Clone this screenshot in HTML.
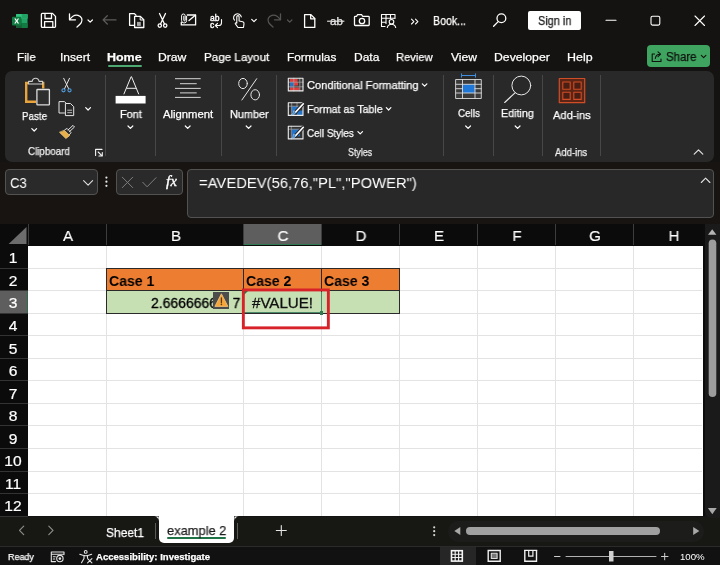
<!DOCTYPE html>
<html>
<head>
<meta charset="utf-8">
<title>Excel</title>
<style>
*{box-sizing:border-box;margin:0;padding:0}
html,body{width:720px;height:565px;overflow:hidden;background:#141414;font-family:"Liberation Sans",sans-serif;color:#fff}
#app{position:relative;width:720px;height:565px;overflow:hidden;background:#151311}
.abs{position:absolute}
.t{position:absolute;white-space:nowrap;line-height:1;transform-origin:0 50%;will-change:transform;-webkit-text-stroke:0.25px}
.c{position:absolute;white-space:nowrap;line-height:1;text-align:center;transform:translateX(-50%);will-change:transform}
svg{position:absolute;overflow:visible}
/* title */
#title{left:0;top:0;width:720px;height:44px;background:#151311}
#tabs{left:0;top:44px;width:720px;height:26px;background:#151311}
.tab{font-size:13.5px;color:#fff}
/* ribbon */
#ribbon{left:5px;top:70.5px;width:709px;height:91px;background:#292929;border-radius:7px}
.sep{position:absolute;width:1px;background:#474747;top:75px;height:80.5px}
.rl{font-size:11.5px;color:#fff}
.gl{font-size:10.5px;color:#e6e6e6}
/* formula */
#fbar{left:0;top:162px;width:720px;height:62px;background:#181412}
.box{position:absolute;background:#2a2a2a;border:1px solid #525252;border-radius:4px}
/* grid */
#colhdr{left:0;top:224px;width:702.7px;height:21.6px;background:#0b0b0b}
#rowhdr{left:0;top:245.5px;width:28.3px;height:270.9px;background:#0b0b0b}
#grid{left:28.3px;top:245.6px;width:674.4px;height:270.9px;background:#fff}
.ch{position:absolute;top:224px;height:22px;color:#fff;font-size:15px;line-height:22px;text-align:center;border-right:1px solid #3a3a3a}
.rh{position:absolute;left:0;width:28px;color:#fff;font-size:16px;text-align:center;border-bottom:1px solid #333}
.vl{position:absolute;top:245.5px;width:1px;height:270.9px;background:#e3e3e3}
.hl{position:absolute;left:28.3px;width:674.2px;height:1px;background:#e3e3e3}
#vscroll{left:702.7px;top:224px;width:17.3px;height:292.2px;background:#151515}
#sheetbar{left:0;top:516.5px;width:720px;height:30px;background:#171714}
#status{left:0;top:545.8px;width:720px;height:19.2px;background:#111;border-top:1px solid #2b2b2b}
.st{font-size:10.5px;color:#fff}
</style>
</head>
<body>
<div id="app">
<div id="title" class="abs"></div>
<div id="tabs" class="abs"></div>
<div id="ribbon" class="abs"></div>
<div id="fbar" class="abs"></div>
<div id="colhdr" class="abs"></div>
<div id="rowhdr" class="abs"></div>
<div id="grid" class="abs"></div>
<div id="vscroll" class="abs"></div>
<div id="sheetbar" class="abs"></div>
<div id="status" class="abs"></div>
<!--TITLE-->
<svg class="abs" style="left:0;top:0" width="720" height="44" viewBox="0 0 720 44" fill="none" stroke="#fff" stroke-width="1.3" stroke-linecap="round" stroke-linejoin="round">
<!-- excel logo -->
<g stroke="none">
<rect x="16" y="14" width="11.5" height="14" rx="1.2" fill="#21a366"/>
<rect x="16" y="14" width="11.5" height="4.7" rx="1" fill="#33c481"/>
<rect x="21.7" y="14" width="5.8" height="4.7" fill="#21a366"/>
<rect x="16" y="18.7" width="5.7" height="4.7" fill="#107c41"/>
<rect x="16" y="23.3" width="11.5" height="4.7" rx="1" fill="#185c37"/>
<rect x="21.7" y="23.3" width="5.8" height="4.7" fill="#107c41"/>
<rect x="12" y="16.7" width="9.3" height="8.8" rx="1" fill="#107c41"/>
<path d="M14.3 18.6h1.5l.95 1.7.95-1.7h1.4l-1.6 2.5 1.65 2.5h-1.5l-.98-1.75-.98 1.75h-1.45l1.65-2.5z" fill="#fff"/>
</g>
<!-- save -->
<path d="M42.300 13.400h10.200l3 3v10a.9.900 0 0 1-.9.900h-12.300a.9.900 0 0 1-.9-.9v-12.100a.9.900 0 0 1 .9-.9z"/>
<path d="M45 13.600v4.900h6.500v-4.900M44.600 27.100v-5.500h8.200v5.500"/>
<!-- undo -->
<path d="M69.500 13.800v6h6"/>
<path d="M69.800 19.500c2.200-3.300 5.300-5 8.300-4.200 3.600 1 4.800 4.700 3.200 7.400-.9 1.500-2.300 2.700-4.300 4.300"/>
<path d="M88 20l2.200 2.200 2.200-2.200" stroke-width="1.2"/>
<!-- back arrow grey -->
<path d="M116 19.900h-12.800M107.300 15.800l-4.200 4.100 4.200 4.100" stroke="#5c5c5c"/>
<!-- copy/paste doc -->
<path d="M134 25.300h-4.400v-11.700h4.800l1.600 1.600"/>
<path d="M134.600 16.400h5.800l3.400 3.400v7.700h-9.200z"/>
<path d="M140.200 16.600v3.400h3.400" stroke-width="1"/>
<rect x="137" y="21.900" width="3.800" height="4" fill="#a8a8a8" stroke="none"/>
<!-- scissors -->
<path d="M159.500 13.500l5 10.500M165.500 13.500l-5 10.500"/>
<circle cx="159.800" cy="25.600" r="1.700"/><circle cx="165.200" cy="25.600" r="1.700"/>
<!-- envelope with clip -->
<path d="M187.300 15h8.300v9.900h-14.300v-2.600"/>
<path d="M195.300 15.300l-6.300 5.300"/>
<path d="M186.600 16.300v4.200a2.500 2.500 0 0 1-5 0v-4.700a1.800 1.800 0 0 1 3.600 0v4.400a.7.700 0 0 1-1.400 0v-3.900" stroke-width="1"/>
<!-- redo grey -->
<g stroke="#555">
<path d="M280.500 13.800v6h-6"/>
<path d="M280.200 19.500c-2.200-3.300-5.300-5-8.300-4.200-3.600 1-4.800 4.700-3.200 7.400.9 1.500 2.300 2.700 4.300 4.300"/>
<path d="M287.500 20l2.200 2.200 2.200-2.200" stroke-width="1.200"/>
</g>
<!-- new doc -->
<path d="M304.600 14.600h6.300l3.900 3.900v8.900h-10.200z"/>
<path d="M310.700 14.800v4h4"/>
<!-- camera -->
<path d="M355.300 16.300h1.300l.9-1.600h4.200l.9 1.600h5.800a.8.800 0 0 1 .8.800v7.600a.8.800 0 0 1-.8.800h-13.100a.8.800 0 0 1-.8-.8v-7.600a.8.800 0 0 1 .8-.8z"/>
<circle cx="362" cy="21" r="2.700"/>
<!-- table person -->
<path d="M385 26.500h-3.500v-12h13.500v4M381.500 18.300h13.500M381.500 22.300h4.500M386 14.500v9M390.500 14.500v4" stroke-width="1.100"/>
<circle cx="391.500" cy="21.800" r="2.300" stroke-width="1.100"/>
<path d="M387.300 27.500c.6-2.200 2.200-3.200 4.200-3.200s3.600 1 4.200 3.200" stroke-width="1.100"/>
<!-- >> -->
<path d="M411.500 19.200l2.400 2.400-2.400 2.400M415.500 19.200l2.400 2.400-2.400 2.400" stroke-width="1.100"/>
<!-- search -->
<circle cx="501.400" cy="18.300" r="4.400"/>
<path d="M498.200 21.600l-4.600 4.700"/>
<!-- window controls -->
<path d="M606 20.300h10" stroke-width="1.100"/>
<rect x="651" y="16.300" width="8.800" height="8.800" rx="1.500" stroke-width="1.100"/>
<path d="M695 16l9.500 9.500M704.500 16l-9.500 9.500" stroke-width="1.100"/>
<!-- touch hand -->
<g stroke-width="1.100">
<path d="M236.800 23.200v-6.400a1.150 1.150 0 0 1 2.300 0v4.200l3.600.8c.9.200 1.400.9 1.300 1.800l-.5 3.900h-5.500l-2.600-3.600c-.5-.8.500-1.700 1.400-.700z"/>
<path d="M234.500 20.200a3.900 3.900 0 1 1 6.800-3.300"/>
</g>
<path d="M251.700 19.300l2.300 2.300 2.300-2.300" stroke-width="1.200"/>
</svg>
<div class="t" style="left:209.500px;top:13.500px;font-size:8.500px;-webkit-text-stroke:0.4px">ab</div>
<div class="t" style="left:209.500px;top:20.500px;font-size:8.500px;-webkit-text-stroke:0.4px">c</div>
<svg class="abs" style="left:0;top:0" width="720" height="44" viewBox="0 0 720 44" fill="none" stroke="#fff" stroke-width="1.100" stroke-linecap="round" stroke-linejoin="round">
<path d="M221.500 19.500v3.200c0 1.800-1 2.800-2.800 2.800h-3M217.500 23.300l-2.200 2.200 2.200 2.200"/>
<path d="M327.500 21.200h16.500" stroke-width="1"/>
</svg>
<div class="t" style="left:330px;top:15.500px;font-size:11.500px;color:#e8e8e8">ab</div>
<div class="t" style="left:432.6px;top:14.80px;font-size:12.2px;font-weight:400;color:#fff;transform:scaleX(0.8699);">Book...</div>
<div class="abs" style="left:528px;top:11px;width:52.500px;height:19px;background:#fff;border-radius:2px"></div>
<div class="t" style="left:537.6px;top:14.70px;font-size:12.2px;font-weight:400;color:#1b1b1b;transform:scaleX(0.8963);">Sign in</div>

<!--tabs-->
<div class="t" style="left:16.8px;top:51.60px;font-size:11.8px;font-weight:400;color:#fff;transform:scaleX(0.9834);">File</div>
<div class="t" style="left:59.5px;top:51.60px;font-size:11.8px;font-weight:400;color:#fff;transform:scaleX(1.0164);">Insert</div>
<div class="t" style="left:107.2px;top:51.60px;font-size:11.8px;font-weight:700;color:#fff;transform:scaleX(1.0555);">Home</div>
<div class="t" style="left:157.8px;top:51.60px;font-size:11.8px;font-weight:400;color:#fff;transform:scaleX(1.0316);">Draw</div>
<div class="t" style="left:203.5px;top:51.60px;font-size:11.8px;font-weight:400;color:#fff;transform:scaleX(0.9857);">Page Layout</div>
<div class="t" style="left:287.2px;top:51.60px;font-size:11.8px;font-weight:400;color:#fff;transform:scaleX(1.0026);">Formulas</div>
<div class="t" style="left:353.8px;top:51.60px;font-size:11.8px;font-weight:400;color:#fff;transform:scaleX(1.0192);">Data</div>
<div class="t" style="left:396.2px;top:51.60px;font-size:11.8px;font-weight:400;color:#fff;transform:scaleX(0.9460);">Review</div>
<div class="t" style="left:450.5px;top:51.60px;font-size:11.8px;font-weight:400;color:#fff;transform:scaleX(1.0253);">View</div>
<div class="t" style="left:493.9px;top:51.60px;font-size:11.8px;font-weight:400;color:#fff;transform:scaleX(1.0375);">Developer</div>
<div class="t" style="left:567.2px;top:51.60px;font-size:11.8px;font-weight:400;color:#fff;transform:scaleX(1.0550);">Help</div>
<div class="abs" style="left:107.5px;top:64.7px;width:34px;height:2.3px;background:#4ea872;border-radius:1px"></div>
<div class="abs" style="left:647px;top:45px;width:63px;height:22px;background:#3ea45f;border-radius:4px"></div>
<div class="t" style="left:665.5px;top:50.70px;font-size:12px;font-weight:400;color:#10130f;transform:scaleX(0.9522);">Share</div>
<svg class="abs" style="left:0;top:44px" width="720" height="26" viewBox="0 44 720 26" fill="none" stroke="#10130f" stroke-width="1.1" stroke-linecap="round" stroke-linejoin="round">
<path d="M654.5 54h-2.300v7.500h8.800v-2.500M655.300 58.500c.3-2.800 2-4.300 4.700-4.300M658 51.800l2.600 2.400-2.600 2.400"/>
<path d="M701.300 55.300l2.300 2.300 2.300-2.300"/>
</svg>

<!--ribbon-->
<div class="sep" style="left:104.8px"></div><div class="sep" style="left:154.5px"></div><div class="sep" style="left:221.0px"></div><div class="sep" style="left:276.0px"></div><div class="sep" style="left:443.2px"></div><div class="sep" style="left:493.2px"></div><div class="sep" style="left:542.1px"></div><div class="sep" style="left:600.2px"></div>
<div class="t" style="left:22.2px;top:110.70px;font-size:11.2px;font-weight:400;color:#fff;transform:scaleX(0.8738);">Paste</div><div class="t" style="left:120px;top:108.50px;font-size:11.2px;font-weight:400;color:#fff;transform:scaleX(0.9736);">Font</div><div class="t" style="left:163px;top:108.50px;font-size:11.2px;font-weight:400;color:#fff;transform:scaleX(1.0090);">Alignment</div><div class="t" style="left:229.6px;top:108.50px;font-size:11.2px;font-weight:400;color:#fff;transform:scaleX(0.9750);">Number</div><div class="t" style="left:457.5px;top:108.40px;font-size:11.2px;font-weight:400;color:#fff;transform:scaleX(0.8844);">Cells</div><div class="t" style="left:501.2px;top:108.40px;font-size:11.2px;font-weight:400;color:#fff;transform:scaleX(0.9585);">Editing</div><div class="t" style="left:552.5px;top:109.80px;font-size:11.8px;font-weight:400;color:#fff;transform:scaleX(0.9450);">Add-ins</div><div class="t" style="left:306.7px;top:80.00px;font-size:11.2px;font-weight:400;color:#fff;transform:scaleX(0.9923);">Conditional Formatting</div><div class="t" style="left:306.7px;top:103.90px;font-size:11.2px;font-weight:400;color:#fff;transform:scaleX(0.9461);">Format as Table</div><div class="t" style="left:306.7px;top:127.80px;font-size:11.2px;font-weight:400;color:#fff;transform:scaleX(0.8854);">Cell Styles</div><div class="t" style="left:28.4px;top:147.40px;font-size:10.4px;font-weight:400;color:#f0f0f0;transform:scaleX(0.9397);">Clipboard</div><div class="t" style="left:347.8px;top:147.80px;font-size:10.4px;font-weight:400;color:#f0f0f0;transform:scaleX(0.8552);">Styles</div><div class="t" style="left:555px;top:148.40px;font-size:10.4px;font-weight:400;color:#f0f0f0;transform:scaleX(0.9139);">Add-ins</div>
<svg class="abs" style="left:0;top:70px" width="720" height="92" viewBox="0 70 720 92" fill="none" stroke="#fff" stroke-width="1.1" stroke-linecap="round" stroke-linejoin="round">
<!-- chevrons -->
<g stroke-width="1.2">
<path d="M31.800 128.600l2.400 2.400 2.400-2.400"/>
<path d="M85.700 107.600l2.400 2.400 2.400-2.400"/>
<path d="M128 126l2.400 2.400 2.400-2.400"/>
<path d="M185.300 126l2.400 2.400 2.400-2.400"/>
<path d="M246.200 126l2.400 2.400 2.400-2.400"/>
<path d="M465.700 126l2.400 2.400 2.400-2.400"/>
<path d="M515.200 126l2.400 2.400 2.400-2.400"/>
<path d="M422.300 83.800l2.300 2.300 2.300-2.300"/>
<path d="M386.300 107.700l2.300 2.300 2.300-2.300"/>
<path d="M357.900 131.600l2.300 2.300 2.300-2.300"/>
<path d="M694.200 154.200l4.300-4.300 4.300 4.300" stroke="#e0e0e0"/>
</g>
<!-- paste -->
<path d="M36 101.800h-9.800v-18.800h2.500M40.800 83h2.400v5.500" stroke="#e9a43c" stroke-width="2.400" stroke-linecap="butt" stroke-linejoin="miter"/>
<path d="M28.600 84v-2.600h3.600c.2-1.700 1.500-3.200 3.400-3.200s3.200 1.500 3.400 3.200h3.600v2.600z" stroke="#cfcfcf" stroke-width="1.100" fill="#292929"/>
<rect x="36.900" y="89.500" width="12.500" height="15.400" rx=".6" stroke="#dcdcdc" stroke-width="1.300" fill="#2e2e2e"/>
<!-- cut -->
<path d="M63.700 78.300l5 10.500M69.500 78.300l-5 10.500" stroke="#e6e6e6" stroke-width="1"/>
<circle cx="63.500" cy="90.300" r="1.600" stroke="#4f9de0" stroke-width="1.100"/><circle cx="69.500" cy="90.300" r="1.600" stroke="#4f9de0" stroke-width="1.100"/>
<!-- copy -->
<path d="M64.500 113h-5.500v-11.400h5.500l1.800 1.800" stroke="#e6e6e6" stroke-width="1"/>
<path d="M65.800 103.500h4.700l3.200 3.200v8.900h-7.900z" stroke="#e6e6e6" stroke-width="1" fill="#292929"/>
<path d="M67.700 110.200h4M67.700 112.700h4" stroke="#cfcfcf" stroke-width=".9"/>
<!-- format painter -->
<path d="M68 130l5-4.600 1.500 1.600-5 4.600" stroke="#e6e6e6" stroke-width="1"/>
<path d="M64.800 129.800l2.300-1.400 4 4.300-1.700 2" stroke="#e6e6e6" stroke-width=".9"/>
<path d="M64.500 130.500l5.200 5-3.800 3-6.200-6z" fill="#e8b04a" stroke="#f3d28a" stroke-width=".7"/>
<!-- launcher -->
<path d="M95.600 155.400v-6h6.400M98.200 152l3.800 3.800M102.300 152.600v3.400h-3.400" stroke="#f4f4f4" stroke-width="1.100"/>
<!-- Font A -->
<path d="M123.800 94.300l7.300-17.600h.4l7.300 17.600M126.500 88.300h9.700" stroke="#f0f0f0" stroke-width="1" stroke-linecap="butt"/>
<rect x="115.600" y="95.900" width="30" height="7.600" fill="#fff" stroke="none"/>
<!-- Alignment -->
<path d="M175 78.700h25.700M180 83.700h16.700M175 88.400h25.700M180 92.900h16.700M175 97.400h25.700" stroke="#d6d6d6" stroke-width="1" stroke-linecap="butt"/>
<!-- percent -->
<ellipse cx="243" cy="83.500" rx="4.300" ry="5.100" stroke="#e6e6e6" stroke-width="1"/>
<ellipse cx="255.200" cy="94.800" rx="4.300" ry="5.100" stroke="#e6e6e6" stroke-width="1"/>
<path d="M256.700 78.700l-14.800 21.300" stroke="#e6e6e6" stroke-width="1"/>
<!-- CF icon -->
<g stroke="none">
<rect x="288" y="78" width="15" height="13" fill="#3a3a3a"/>
<rect x="290" y="79" width="7.500" height="3" fill="#e03c3c"/>
<rect x="294" y="82" width="4" height="3.500" fill="#e03c3c"/>
<rect x="290" y="82" width="3.500" height="6" fill="#2f6fc0"/>
<rect x="290" y="87.500" width="9.500" height="3" fill="#e03c3c"/>
</g>
<path d="M288.200 82.200h14.800M288.200 86.800h14.800M293.800 78.200v12.700M299.800 78.200v12.700" stroke="#a8a8a8" stroke-width=".7"/><path d="M288.300 78.300h14.700v12.600h-14.700z" stroke="#ececec" stroke-width="1.100"/>
<!-- FT icon -->
<g stroke="none">
<rect x="288" y="102.500" width="15" height="13" fill="#333"/>
<rect x="291.500" y="106.300" width="8" height="6" fill="#2373c8"/>
<rect x="297" y="110.500" width="6" height="5" fill="#2373c8"/>
</g>
<path d="M288.200 106.200h14.800M291.700 102.700v12.700M297 102.700v4" stroke="#a8a8a8" stroke-width=".7"/><path d="M288.300 102.800h14.700v12.600h-14.700z" stroke="#ececec" stroke-width="1.100"/>
<path d="M303.300 103.800l-7.800 8.500" stroke="#2a2a2a" stroke-width="3.600"/><path d="M303.300 103.800l-7.800 8.500" stroke="#fff" stroke-width="1.700"/>
<path d="M295.800 112.300c-.8 1.800-2.300 2.800-4.800 3 1.500-.9 1.800-2.200 2.600-4.300z" fill="#3b8fe0" stroke="#cfe3f7" stroke-width=".5"/>
<!-- CS icon -->
<g stroke="none">
<rect x="288" y="126" width="15" height="13" fill="#333"/>
<rect x="291.500" y="129.300" width="8.500" height="7" fill="#2373c8"/>
</g>
<path d="M288.200 129.200h14.800M291.300 126.200v12.700" stroke="#a8a8a8" stroke-width=".7"/><path d="M288.300 126.300h14.700v12.600h-14.700z" stroke="#ececec" stroke-width="1.100"/>
<path d="M303.300 127.300l-7.800 8.500" stroke="#2a2a2a" stroke-width="3.600"/><path d="M303.300 127.300l-7.800 8.500" stroke="#fff" stroke-width="1.700"/>
<path d="M295.800 135.800c-.8 1.800-2.300 2.800-4.800 3 1.500-.9 1.800-2.200 2.600-4.300z" fill="#3b8fe0" stroke="#cfe3f7" stroke-width=".5"/>
<!-- Cells icon -->
<path d="M461.500 75.500h14M461.500 73.800v3.400M475.500 73.800v3.400" stroke="#3f8ee0" stroke-width="1"/>
<rect x="456" y="79.500" width="25.300" height="19" fill="#3a3a3a" stroke="none"/>
<rect x="462.500" y="84.300" width="12.500" height="8.700" fill="#1f78d8" stroke="none"/>
<path d="M456 79.500h25.300v19h-25.300zM456 84.300h25.300M456 88.700h6.500M475 88.700h6.300M456 93h25.300M462.500 79.500v19M475 79.500v19" stroke="#dcdcdc" stroke-width=".9"/>
<!-- Editing magnifier -->
<circle cx="521.300" cy="85.500" r="9.400" stroke="#e8e8e8" stroke-width="1"/>
<path d="M515 92.800l-10.300 9.700" stroke="#e8e8e8" stroke-width="1.100"/>
<!-- Add-ins -->
<rect x="559.300" y="78.500" width="25.400" height="24.200" fill="#5b2414" stroke="#cf4e27" stroke-width="1.200"/>
<path d="M562.800 82h7.400v7.200h-7.400zM573.800 82h7.400v7.200h-7.400zM562.800 92.200h7.400v7.200h-7.400zM573.800 92.200h7.400v7.200h-7.400z" stroke="#cf4e27" stroke-width="1.100" fill="#4a1e12"/>
</svg>

<!--formula-->
<div class="box" style="left:5px;top:169px;width:93px;height:26px"></div><div class="box" style="left:116px;top:169px;width:67px;height:26px"></div><div class="box" style="left:187px;top:169px;width:527px;height:49px;background:#282828"></div>
<div class="t" style="left:9.6px;top:174.85px;font-size:15.3px;font-weight:400;color:#fff;transform:scaleX(0.8588);-webkit-text-stroke:0">C3</div><div class="t" style="left:198.6px;top:175.10px;font-size:15.4px;font-weight:400;color:#fff;transform:scaleX(0.9619);-webkit-text-stroke:0">=AVEDEV(56,76,"PL","POWER")</div><div class="t" style="left:165.6px;top:172.900px;font-family:'Liberation Serif',serif;font-style:italic;font-size:15.5px;color:#fff;-webkit-text-stroke:0.35px">f<span style="font-size:14.5px;margin-left:0.2px;position:relative;top:0.3px">x</span></div>
<svg class="abs" style="left:0;top:162px" width="720" height="62" viewBox="0 162 720 62" fill="none" stroke="#fff" stroke-width="1.1" stroke-linecap="round" stroke-linejoin="round">
<path d="M83.600 180.600l4.500 4.500 4.500-4.500" stroke="#e0e0e0" stroke-width="1.100"/>
<g fill="#e8e8e8" stroke="none"><circle cx="106.400" cy="177.600" r="1.100"/><circle cx="106.400" cy="181.700" r="1.100"/><circle cx="106.400" cy="185.800" r="1.100"/></g>
<path d="M122.300 177.200l10.400 10.400M132.700 177.200l-10.400 10.400" stroke="#7e7e7e" stroke-width="1"/>
<path d="M142.800 182.300l4.300 4.500 8.900-9.100" stroke="#7e7e7e" stroke-width="1"/>
<path d="M701.300 182.500l4.300-4.300 4.300 4.300" stroke="#e0e0e0" stroke-width="1.100"/>
</svg>

<!--grid-->
<div class="abs" style="left:243.7px;top:224.2px;width:77.9px;height:21.3px;background:#5e5e5e"></div><div class="abs" style="left:243.2px;top:244.3px;width:78.4px;height:1.2px;background:#2f7a53"></div><div class="abs" style="left:0;top:291.1px;width:27px;height:21.55px;background:#5e5e5e"></div><div class="abs" style="left:27px;top:290.6px;width:1.2px;height:22.55px;background:#2f6a4a"></div>
<div class="abs" style="left:106.0px;top:224.2px;width:1px;height:21.3px;background:#3c3c3c"></div><div class="vl" style="left:106.0px"></div><div class="abs" style="left:242.7px;top:224.2px;width:1px;height:21.3px;background:#3c3c3c"></div><div class="vl" style="left:242.7px"></div><div class="abs" style="left:321.1px;top:224.2px;width:1px;height:21.3px;background:#3c3c3c"></div><div class="vl" style="left:321.1px"></div><div class="abs" style="left:399.0px;top:224.2px;width:1px;height:21.3px;background:#3c3c3c"></div><div class="vl" style="left:399.0px"></div><div class="abs" style="left:477.0px;top:224.2px;width:1px;height:21.3px;background:#3c3c3c"></div><div class="vl" style="left:477.0px"></div><div class="abs" style="left:555.0px;top:224.2px;width:1px;height:21.3px;background:#3c3c3c"></div><div class="vl" style="left:555.0px"></div><div class="abs" style="left:633.2px;top:224.2px;width:1px;height:21.3px;background:#3c3c3c"></div><div class="vl" style="left:633.2px"></div><div class="abs" style="left:27.6px;top:224.2px;width:1px;height:21.3px;background:#3c3c3c"></div>
<div class="hl" style="top:267.55px"></div><div class="abs" style="left:0;top:267.55px;width:28px;height:1px;background:#333"></div><div class="hl" style="top:290.10px"></div><div class="abs" style="left:0;top:290.10px;width:28px;height:1px;background:#333"></div><div class="hl" style="top:312.65px"></div><div class="abs" style="left:0;top:312.65px;width:28px;height:1px;background:#333"></div><div class="hl" style="top:335.20px"></div><div class="abs" style="left:0;top:335.20px;width:28px;height:1px;background:#333"></div><div class="hl" style="top:357.75px"></div><div class="abs" style="left:0;top:357.75px;width:28px;height:1px;background:#333"></div><div class="hl" style="top:380.30px"></div><div class="abs" style="left:0;top:380.30px;width:28px;height:1px;background:#333"></div><div class="hl" style="top:402.85px"></div><div class="abs" style="left:0;top:402.85px;width:28px;height:1px;background:#333"></div><div class="hl" style="top:425.40px"></div><div class="abs" style="left:0;top:425.40px;width:28px;height:1px;background:#333"></div><div class="hl" style="top:447.95px"></div><div class="abs" style="left:0;top:447.95px;width:28px;height:1px;background:#333"></div><div class="hl" style="top:470.50px"></div><div class="abs" style="left:0;top:470.50px;width:28px;height:1px;background:#333"></div><div class="hl" style="top:493.05px"></div><div class="abs" style="left:0;top:493.05px;width:28px;height:1px;background:#333"></div><div class="abs" style="left:0;top:515.60px;width:28px;height:1px;background:#333"></div>
<svg class="abs" style="left:0;top:224px" width="28" height="22" viewBox="0 0 28 22"><path d="M26.500 2.900v17.100h-17.900z" fill="#6c6c6c"/></svg>
<div class="c" style="left:68.1px;top:227.8px;font-size:15.4px;color:#fff;-webkit-text-stroke:0.15px;transform:translateX(-50%) scaleX(0.98)">A</div><div class="c" style="left:175.5px;top:227.8px;font-size:15.4px;color:#fff;-webkit-text-stroke:0.15px;transform:translateX(-50%) scaleX(0.98)">B</div><div class="c" style="left:283.1px;top:227.8px;font-size:15.4px;color:#fff;-webkit-text-stroke:0.15px;transform:translateX(-50%) scaleX(0.98)">C</div><div class="c" style="left:361.2px;top:227.8px;font-size:15.4px;color:#fff;-webkit-text-stroke:0.15px;transform:translateX(-50%) scaleX(0.98)">D</div><div class="c" style="left:439.2px;top:227.8px;font-size:15.4px;color:#fff;-webkit-text-stroke:0.15px;transform:translateX(-50%) scaleX(0.98)">E</div><div class="c" style="left:517.2px;top:227.8px;font-size:15.4px;color:#fff;-webkit-text-stroke:0.15px;transform:translateX(-50%) scaleX(0.98)">F</div><div class="c" style="left:595.3px;top:227.8px;font-size:15.4px;color:#fff;-webkit-text-stroke:0.15px;transform:translateX(-50%) scaleX(0.98)">G</div><div class="c" style="left:673.5px;top:227.8px;font-size:15.4px;color:#fff;-webkit-text-stroke:0.15px;transform:translateX(-50%) scaleX(0.98)">H</div>
<div class="c" style="left:13.1px;top:252.37px;font-size:13.8px;color:#fff;-webkit-text-stroke:0.2px;transform:translateX(-50%) scaleX(1.13)">1</div><div class="c" style="left:13.1px;top:274.92px;font-size:13.8px;color:#fff;-webkit-text-stroke:0.2px;transform:translateX(-50%) scaleX(1.13)">2</div><div class="c" style="left:13.1px;top:297.47px;font-size:13.8px;color:#fff;-webkit-text-stroke:0.2px;transform:translateX(-50%) scaleX(1.13)">3</div><div class="c" style="left:13.1px;top:320.02px;font-size:13.8px;color:#fff;-webkit-text-stroke:0.2px;transform:translateX(-50%) scaleX(1.13)">4</div><div class="c" style="left:13.1px;top:342.57px;font-size:13.8px;color:#fff;-webkit-text-stroke:0.2px;transform:translateX(-50%) scaleX(1.13)">5</div><div class="c" style="left:13.1px;top:365.12px;font-size:13.8px;color:#fff;-webkit-text-stroke:0.2px;transform:translateX(-50%) scaleX(1.13)">6</div><div class="c" style="left:13.1px;top:387.68px;font-size:13.8px;color:#fff;-webkit-text-stroke:0.2px;transform:translateX(-50%) scaleX(1.13)">7</div><div class="c" style="left:13.1px;top:410.22px;font-size:13.8px;color:#fff;-webkit-text-stroke:0.2px;transform:translateX(-50%) scaleX(1.13)">8</div><div class="c" style="left:13.1px;top:432.77px;font-size:13.8px;color:#fff;-webkit-text-stroke:0.2px;transform:translateX(-50%) scaleX(1.13)">9</div><div class="c" style="left:13.1px;top:455.32px;font-size:13.8px;color:#fff;-webkit-text-stroke:0.2px;transform:translateX(-50%) scaleX(1.13)">10</div><div class="c" style="left:13.1px;top:477.87px;font-size:13.8px;color:#fff;-webkit-text-stroke:0.2px;transform:translateX(-50%) scaleX(1.13)">11</div><div class="c" style="left:13.1px;top:500.42px;font-size:13.8px;color:#fff;-webkit-text-stroke:0.2px;transform:translateX(-50%) scaleX(1.13)">12</div>
<div class="abs" style="left:106.5px;top:268.05px;width:293px;height:22.55px;background:#ed7d31"></div><div class="abs" style="left:106.5px;top:290.6px;width:293px;height:22.55px;background:#c6e0b4"></div><div class="abs" style="left:106px;top:267.55px;width:294px;height:1px;background:#2a2a2a"></div><div class="abs" style="left:106px;top:290.10px;width:294px;height:1px;background:#2a2a2a"></div><div class="abs" style="left:106px;top:312.65px;width:294px;height:1px;background:#2a2a2a"></div><div class="abs" style="left:106.0px;top:267.55px;width:1px;height:46.10px;background:#2a2a2a"></div><div class="abs" style="left:242.7px;top:267.55px;width:1px;height:46.10px;background:#2a2a2a"></div><div class="abs" style="left:321.1px;top:267.55px;width:1px;height:46.10px;background:#2a2a2a"></div><div class="abs" style="left:399.0px;top:267.55px;width:1px;height:46.10px;background:#2a2a2a"></div>
<div class="t" style="left:109.4px;top:274.00px;font-size:14.4px;font-weight:700;color:#000;transform:scaleX(0.9740);-webkit-text-stroke:0">Case 1</div><div class="t" style="left:246.1px;top:274.00px;font-size:14.4px;font-weight:700;color:#000;transform:scaleX(0.9740);-webkit-text-stroke:0">Case 2</div><div class="t" style="left:323.8px;top:274.00px;font-size:14.4px;font-weight:700;color:#000;transform:scaleX(0.9740);-webkit-text-stroke:0">Case 3</div><div class="t" style="left:151.2px;top:295.80px;font-size:14.4px;font-weight:400;color:#000;transform:scaleX(0.9702);-webkit-text-stroke:0.3px">2.6666666667</div><div class="t" style="left:252px;top:295.80px;font-size:14.4px;font-weight:400;color:#111;transform:scaleX(1.0495);-webkit-text-stroke:0.3px">#VALUE!</div><div class="abs" style="left:212.700px;top:291.500px;width:16.900px;height:17.300px;background:#4c4c4c"></div><svg class="abs" style="left:212px;top:290px" width="20" height="20" viewBox="212 290 20 20"><path d="M221.400 293.800l6.500 12.600h-13z" fill="#f4a63a" stroke="#f9c77a" stroke-width=".8" stroke-linejoin="round"/><path d="M221.400 298v4.500" stroke="#5a3a10" stroke-width="1.300" stroke-linecap="round"/><circle cx="221.400" cy="304.400" r=".8" fill="#5a3a10"/></svg><div class="abs" style="left:229.400px;top:292px;width:3.200px;height:20px;background:#c6e0b4"></div><div class="abs" style="left:243.7px;top:312.15px;width:77px;height:1.3px;background:#4a8a68"></div><div class="abs" style="left:320.900px;top:291.60px;width:1.3px;height:20.55px;background:#4a8a68"></div><div class="abs" style="left:319.500px;top:311.200px;width:3.800px;height:3.800px;background:#2f7a53"></div><svg class="abs" style="left:243.700px;top:291.300px" width="5" height="5" viewBox="0 0 5 5"><path d="M0 0h4L0 4z" fill="#1e7a45"/></svg><svg class="abs" style="left:240px;top:287px" width="92" height="45" viewBox="240 287 92 45"><rect x="243.350" y="289.950" width="85" height="37.900" fill="none" stroke="#d8222a" stroke-width="2.900"/></svg>
<div class="abs" style="left:704.700px;top:224px;width:15.300px;height:294px;background:#1a1a1a;border-radius:0 0 0 6px"></div><div class="abs" style="left:702.700px;top:224px;width:2px;height:292.200px;background:#0c0c0c"></div><svg class="abs" style="left:702px;top:224px" width="18" height="292" viewBox="702 224 18 292"><path d="M708 234.700l4.200-5.500 4.200 5.500z" fill="#b4b4b4"/><path d="M707.900 508l4.400 6.200 4.400-6.200z" fill="#a8a8a8"/><rect x="708.700" y="239.500" width="7.600" height="157.500" rx="3.800" fill="#9c9c9c"/></svg>
<!--sheetbar-->
<div class="abs" style="left:448px;top:520.500px;width:256px;height:21.500px;border-radius:10px;background:#1c1c1b"></div><div class="abs" style="left:158.700px;top:516.300px;width:75.800px;height:26.300px;background:#fff;border-radius:0 0 5px 5px"></div><div class="abs" style="left:167px;top:537.200px;width:59px;height:2.200px;background:#1f7246;border-radius:1px"></div><svg class="abs" style="left:150px;top:516px" width="95" height="6" viewBox="150 516 95 6"><path d="M154.200 516.500A4.500 4.500 0 0 1 158.700 521L158.700 516.500ZM239 516.500A4.500 4.500 0 0 0 234.500 521L234.500 516.500Z" fill="#fff"/></svg><div class="abs" style="left:155px;top:523px;width:1px;height:16px;background:#5a5a5a"></div><div class="abs" style="left:236.700px;top:523px;width:1px;height:16px;background:#5a5a5a"></div>
<div class="t" style="left:106.3px;top:525.80px;font-size:13.2px;font-weight:400;color:#fff;transform:scaleX(0.9088);">Sheet1</div><div class="t" style="left:166.7px;top:523.50px;font-size:13.4px;font-weight:400;color:#1e1e1e;transform:scaleX(0.9612);">example 2</div>
<svg class="abs" style="left:0;top:516px" width="720" height="31" viewBox="0 516 720 31" fill="none" stroke="#fff" stroke-width="1.1" stroke-linecap="round" stroke-linejoin="round">
<path d="M23.700 526.200l-4.200 4.200 4.200 4.200M48.800 526.200l4.200 4.200-4.200 4.200" stroke="#8c8c8c" stroke-width="1.200"/>
<path d="M276.300 530.500h10M281.300 525.500v10" stroke="#e6e6e6" stroke-width="1.100"/>
<g fill="#d8d8d8" stroke="none"><circle cx="434.200" cy="527.300" r="1.100"/><circle cx="434.200" cy="531.200" r="1.100"/><circle cx="434.200" cy="535.100" r="1.100"/></g>
<path d="M460.300 527v8l-6-4z" fill="#a8a8a8" stroke="none"/>
<path d="M693.200 527v8l6.200-4z" fill="#a8a8a8" stroke="none"/>
<rect x="466" y="527" width="194" height="8" rx="4" fill="#a0a0a0" stroke="none"/>
</svg>

<!--status-->
<div class="abs" style="left:439.700px;top:546.800px;width:36.300px;height:18.200px;background:#262626"></div><div class="t" style="left:8.1px;top:552.95px;font-size:9.3px;font-weight:400;color:#fff;transform:scaleX(0.9637);">Ready</div><div class="t" style="left:96.2px;top:552.95px;font-size:9.3px;font-weight:700;color:#fff;transform:scaleX(1.0262);">Accessibility: Investigate</div><div class="t" style="left:680.2px;top:552.55px;font-size:9.3px;font-weight:400;color:#fff;transform:scaleX(1.0386);-webkit-text-stroke:0">100%</div>
<svg class="abs" style="left:0;top:546px" width="720" height="19" viewBox="0 546 720 19" fill="none" stroke="#fff" stroke-width="1" stroke-linecap="round" stroke-linejoin="round">
<!-- macro record -->
<path d="M51.300 552h12.700v2.600M51.300 552v9.600h4.200M51.300 554.300h12.700M53.300 556.800h2M53.300 559h1.500" stroke="#e6e6e6" stroke-width="1.100"/>
<circle cx="59.900" cy="558.600" r="3.200" stroke="#e6e6e6" stroke-width="1.100"/><circle cx="59.900" cy="558.600" r="1.300" fill="#e6e6e6" stroke="none"/>
<!-- accessibility -->
<circle cx="85.700" cy="551.900" r="1.400" stroke="#e6e6e6" stroke-width="1.100"/>
<path d="M79.800 554.300c2 1 3.600 1.400 5.900 1.400s3.900-.4 5.900-1.400M84 555.700v2.800l-2.500 4.200M87.500 555.700v2" stroke="#e6e6e6" stroke-width="1.100"/>
<path d="M87.600 558.600l4.300 4.200M91.900 558.600l-4.300 4.200" stroke="#e6e6e6" stroke-width="1.100"/>
<!-- normal view -->
<rect x="450.700" y="549.900" width="12.400" height="12" fill="#f4f4f4" stroke="none"/>
<g fill="#1c1c1c" stroke="none"><rect x="452.300" y="551.500" width="2.300" height="2.300"/><rect x="455.750" y="551.500" width="2.300" height="2.300"/><rect x="459.200" y="551.500" width="2.300" height="2.300"/><rect x="452.300" y="554.750" width="2.300" height="2.300"/><rect x="455.750" y="554.750" width="2.300" height="2.300"/><rect x="459.200" y="554.750" width="2.300" height="2.300"/><rect x="452.300" y="558" width="2.300" height="2.300"/><rect x="455.750" y="558" width="2.300" height="2.300"/><rect x="459.200" y="558" width="2.300" height="2.300"/></g>
<!-- page layout -->
<path d="M488.200 550.500h12v10.800h-12z" stroke="#f0f0f0" stroke-width="1.400" stroke-linejoin="miter"/><path d="M491.300 553.300h5.800v5.200h-5.800z" stroke="#dcdcdc" stroke-width="1.100" fill="#777"/>
<!-- page break -->
<path d="M524.800 550v11.300h11.700v-11.300" stroke="#f0f0f0" stroke-width="1.400" stroke-linejoin="miter" stroke-linecap="butt"/><path d="M524.100 550.400h13.100M528.700 550.400v5.800h4.200v-5.800" stroke="#f0f0f0" stroke-width="1.200" stroke-linejoin="miter" stroke-linecap="butt"/>
<!-- zoom -->
<path d="M554.500 556.500h5.500M661.500 556.500h6.500M664.700 553.300v6.500" stroke="#cfcfcf"/>
<path d="M566 556.500h90" stroke="#b0b0b0" stroke-width="1"/>
<rect x="609" y="551" width="4.500" height="10.500" fill="#d0d0d0" stroke="none"/>
</svg>

</div>
</body>
</html>
